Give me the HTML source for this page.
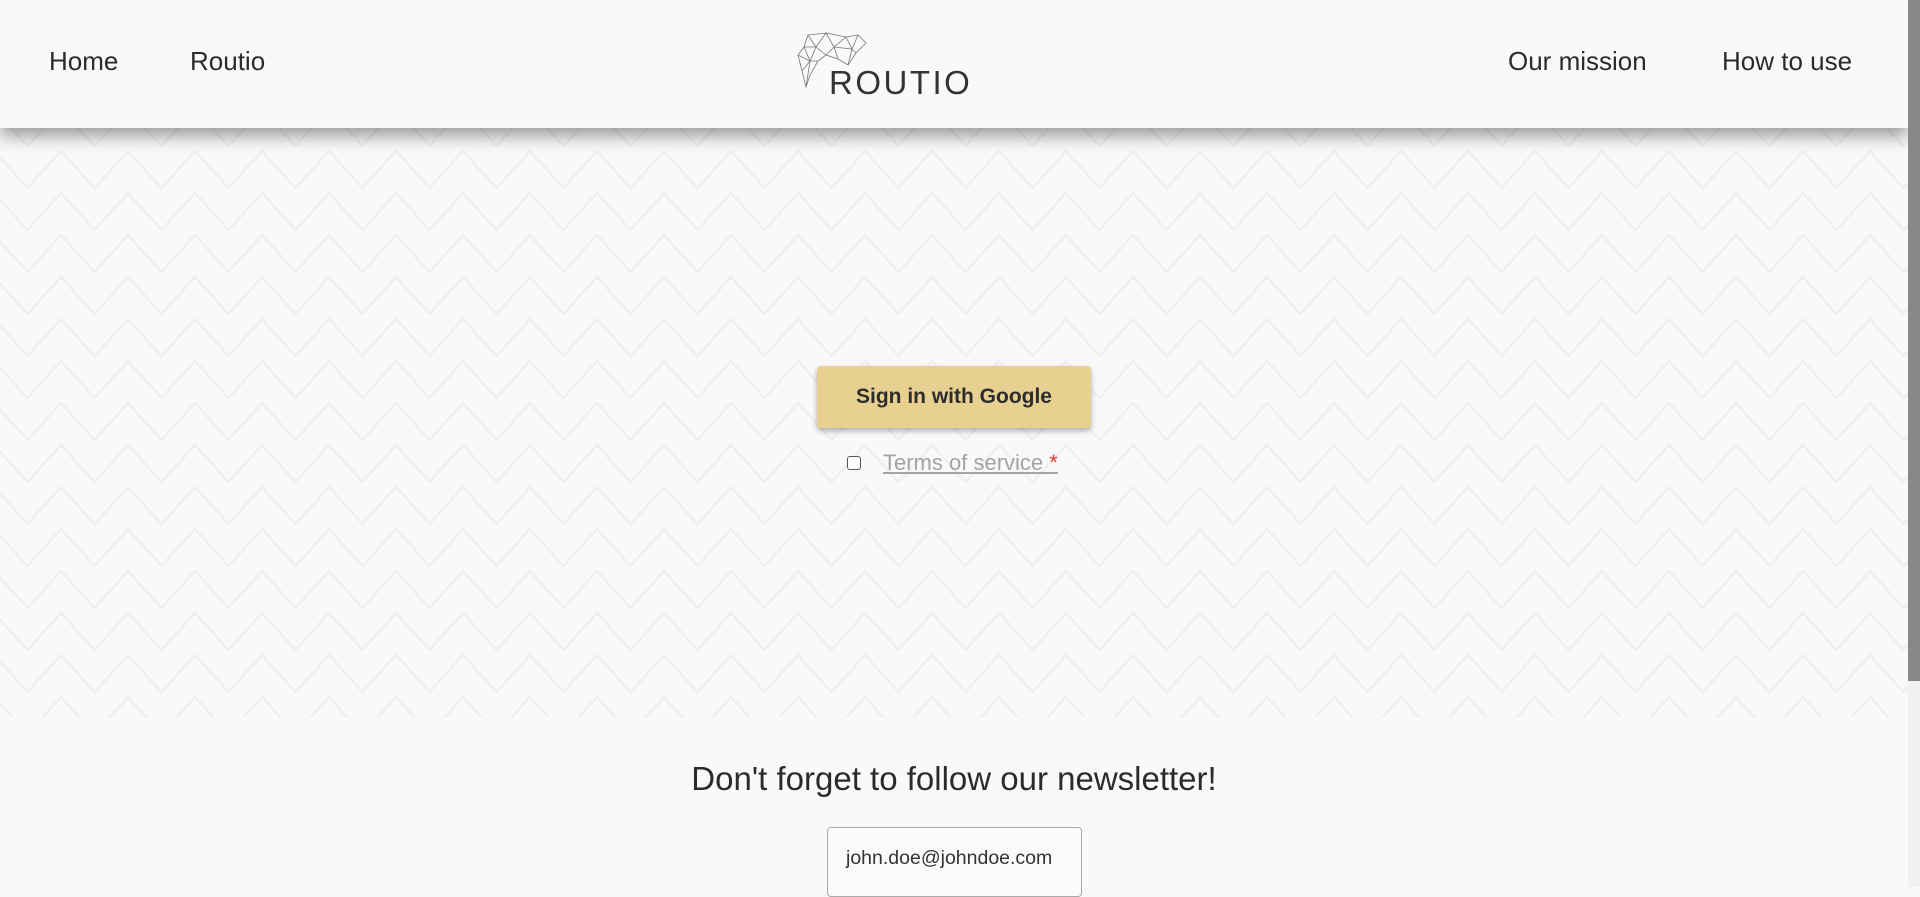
<!DOCTYPE html>
<html><head><meta charset="utf-8"><style>
*{margin:0;padding:0;box-sizing:border-box}
html,body{width:1920px;height:887px;overflow:hidden;background:#f9f9f9;font-family:"Liberation Sans",sans-serif;color:#2b2b2b}
.pat{position:absolute;left:0;top:0;width:1908px;height:717px}
header{position:absolute;left:0;top:0;width:1908px;height:128px;background:#f9f9f9;box-shadow:0 8px 16px rgba(0,0,0,.38)}
.nav{position:absolute;top:46px;font-size:26px;color:#2b2b2b}
.sb{position:absolute;left:1908px;top:0;width:12px;height:887px;background:#f1f1f1}
.sb div{width:12px;height:681px;background:#888}
.btn{position:absolute;left:817px;top:366px;width:274px;height:62px;background:#e8d190;border-radius:4px;box-shadow:0 3px 6px rgba(0,0,0,.3);font-weight:bold;font-size:21px;text-align:center;line-height:62px;color:#2d2d2d}
.cb{position:absolute;left:847px;top:456px;width:14px;height:14px;border:1.5px solid #555;border-radius:3px;background:#fff}
.tos{position:absolute;left:883px;top:450px;font-size:22px;color:#a3a3a3;text-decoration:underline}
.tos span{color:#e53935}
h2{position:absolute;left:0;width:1908px;top:760px;text-align:center;font-weight:normal;font-size:33px;color:#2b2b2b}
.inp{position:absolute;left:827px;top:827px;width:255px;height:70px;border:1px solid #aaa;border-radius:4px;background:#fafafa;font-size:19.5px;padding:19px 0 0 18px;color:#333}
</style></head><body>
<svg class="pat" width="1908" height="717">
<defs><pattern id="z" width="67" height="42" patternUnits="userSpaceOnUse" x="-6" y="22">
<path d="M-67,3 L-33.5,40 L0,3 L33.5,40 L67,3 L100.5,40" fill="none" stroke="#eeeeee" stroke-width="2.2"/>
<path d="M-67,45 L-33.5,82 L0,45 L33.5,82 L67,45 M-67,-39 L-33.5,-2 L0,-39 L33.5,-2 L67,-39" fill="none" stroke="#eeeeee" stroke-width="2.2"/>
</pattern></defs>
<rect width="1908" height="717" fill="#f9f9f9"/><rect width="1908" height="717" fill="url(#z)"/>
</svg>
<header>
<div class="nav" style="left:49px">Home</div>
<div class="nav" style="left:190px">Routio</div>
<div class="nav" style="left:1508px">Our mission</div>
<div class="nav" style="left:1722px">How to use</div>
<svg style="position:absolute;left:796px;top:31px" width="72" height="58" viewBox="0 0 72 58" fill="none" stroke="#777" stroke-width="0.8">
<path d="M12,4 L30,2 L50,6 L62,4 L70,12 L60,22 L52,34 L42,28 L30,24 L22,30 L14,44 L10,56 L6,40 L2,24 L8,16 Z"/>
<path d="M12,4 L20,16 L30,2 L38,16 L50,6 L56,18 L62,4 M20,16 L8,16 M20,16 L30,24 L38,16 L56,18 L60,22 M38,16 L42,28 M2,24 L14,30 L22,30 M14,30 L6,40 M14,30 L10,56 M20,16 L14,30 M56,18 L52,34 M8,16 L14,30"/>
</svg>
<div style="position:absolute;left:829px;top:64px;font-size:33px;letter-spacing:2.5px;color:#333">ROUTIO</div>
</header>
<div class="btn">Sign in with Google</div>
<div class="cb"></div>
<div class="tos">Terms of service <span>*</span></div>
<h2>Don't forget to follow our newsletter!</h2>
<div class="inp">john.doe@johndoe.com</div>
<div class="sb"><div></div></div>
</body></html>
